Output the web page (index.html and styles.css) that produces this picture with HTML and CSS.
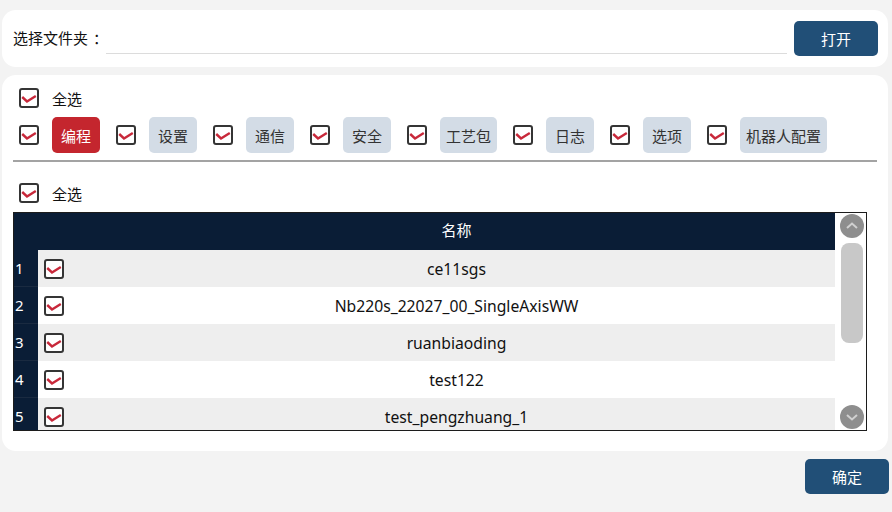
FILE: index.html
```
<!DOCTYPE html>
<html lang="zh">
<head>
  <meta charset="UTF-8">
  <title>导出</title>
  <link rel="stylesheet" href="styles.css">
</head>
<body>
  <div class="panel top-panel">
    <span class="label">选择文件夹<span class="colon">：</span></span>
    <div class="path-input"></div>
    <button class="btn">打开</button>
  </div>

  <div class="panel main-panel">
    <div class="check-row">
      <span class="cb"><svg viewBox="0 0 16 16"><polyline points="1.2,7 6,11.5 14.8,6"/></svg></span>
      <span class="check-text">全选</span>
    </div>

    <div class="tabs">
      <div class="tab-item"><span class="cb"><svg viewBox="0 0 16 16"><polyline points="1.2,7 6,11.5 14.8,6"/></svg></span><span class="tab active">编程</span></div>
      <div class="tab-item"><span class="cb"><svg viewBox="0 0 16 16"><polyline points="1.2,7 6,11.5 14.8,6"/></svg></span><span class="tab">设置</span></div>
      <div class="tab-item"><span class="cb"><svg viewBox="0 0 16 16"><polyline points="1.2,7 6,11.5 14.8,6"/></svg></span><span class="tab">通信</span></div>
      <div class="tab-item"><span class="cb"><svg viewBox="0 0 16 16"><polyline points="1.2,7 6,11.5 14.8,6"/></svg></span><span class="tab">安全</span></div>
      <div class="tab-item"><span class="cb"><svg viewBox="0 0 16 16"><polyline points="1.2,7 6,11.5 14.8,6"/></svg></span><span class="tab w57">工艺包</span></div>
      <div class="tab-item"><span class="cb"><svg viewBox="0 0 16 16"><polyline points="1.2,7 6,11.5 14.8,6"/></svg></span><span class="tab">日志</span></div>
      <div class="tab-item"><span class="cb"><svg viewBox="0 0 16 16"><polyline points="1.2,7 6,11.5 14.8,6"/></svg></span><span class="tab">选项</span></div>
      <div class="tab-item"><span class="cb"><svg viewBox="0 0 16 16"><polyline points="1.2,7 6,11.5 14.8,6"/></svg></span><span class="tab w87">机器人配置</span></div>
    </div>

    <div class="divider"></div>

    <div class="check-row second">
      <span class="cb"><svg viewBox="0 0 16 16"><polyline points="1.2,7 6,11.5 14.8,6"/></svg></span>
      <span class="check-text">全选</span>
    </div>

    <div class="grid">
      <div class="grid-main">
        <div class="grid-head">
          <span class="num-col"></span>
          <span class="cb-col"></span>
          <span class="name-col">名称</span>
        </div>
        <div class="grid-body">
          <div class="grid-row odd"><span class="num-col">1</span><span class="cb-col"><span class="cb"><svg viewBox="0 0 16 16"><polyline points="1.2,7 6,11.5 14.8,6"/></svg></span></span><span class="name-col">ce11sgs</span></div>
          <div class="grid-row"><span class="num-col">2</span><span class="cb-col"><span class="cb"><svg viewBox="0 0 16 16"><polyline points="1.2,7 6,11.5 14.8,6"/></svg></span></span><span class="name-col">Nb220s_22027_00_SingleAxisWW</span></div>
          <div class="grid-row odd"><span class="num-col">3</span><span class="cb-col"><span class="cb"><svg viewBox="0 0 16 16"><polyline points="1.2,7 6,11.5 14.8,6"/></svg></span></span><span class="name-col">ruanbiaoding</span></div>
          <div class="grid-row"><span class="num-col">4</span><span class="cb-col"><span class="cb"><svg viewBox="0 0 16 16"><polyline points="1.2,7 6,11.5 14.8,6"/></svg></span></span><span class="name-col">test122</span></div>
          <div class="grid-row odd"><span class="num-col">5</span><span class="cb-col"><span class="cb"><svg viewBox="0 0 16 16"><polyline points="1.2,7 6,11.5 14.8,6"/></svg></span></span><span class="name-col">test_pengzhuang_1</span></div>
        </div>
      </div>
      <div class="scrollbar">
        <span class="sb-btn"><svg viewBox="0 0 24 24"><polyline points="7,14 12,9.5 17,14"/></svg></span>
        <div class="sb-track"><div class="sb-thumb"></div></div>
        <span class="sb-btn"><svg viewBox="0 0 24 24"><polyline points="7,10 12,14.5 17,10"/></svg></span>
      </div>
    </div>
  </div>

  <div class="footer">
    <button class="btn">确定</button>
  </div>
</body>
</html>
```

FILE: styles.css
```
body {
  margin: 0;
  background: #f3f3f3;
  font-family: "Noto Sans", "Noto Sans CJK SC", sans-serif;
  color: #111;
  font-size: 15px;
}
.panel {
  background: #fff;
  border-radius: 14px;
  margin-left: 2px;
  width: 886px;
}
.top-panel {
  margin-top: 10px;
  height: 57px;
  display: flex;
  align-items: center;
  padding: 0 10px 0 11px;
  box-sizing: border-box;
}
.label {
  width: 93px;
  font-family: "Noto Sans CJK SC", sans-serif;
  font-size: 15px;
  margin-top: -2px;
  white-space: nowrap;
}
.colon {
  margin-left: 5px;
}
.path-input {
  flex: 1;
  height: 26px;
  border-bottom: 1px solid #dcdcdc;
  margin-top: 4px;
}
.btn {
  width: 84px;
  height: 35px;
  border: none;
  border-radius: 5px;
  background: #214f77;
  color: #fff;
  font-family: "Noto Sans CJK SC", sans-serif;
  font-size: 15px;
  cursor: pointer;
}
.top-panel .btn {
  margin-left: 7px;
}

.main-panel {
  margin-top: 8px;
  height: 376px;
  box-sizing: border-box;
  padding: 13px 11px 0 11px;
}
.check-row {
  display: flex;
  align-items: center;
  height: 20px;
  padding-left: 6px;
}
.check-text {
  margin-left: 13px;
  font-family: "Noto Sans CJK SC", sans-serif;
  font-size: 15px;
}
.check-row.second {
  margin-top: 21px;
}

.cb {
  width: 20px;
  height: 20px;
  box-sizing: border-box;
  border: 2px solid #353535;
  border-radius: 3px;
  background: #fff;
  display: inline-flex;
  flex-shrink: 0;
}
.cb svg {
  width: 16px;
  height: 16px;
  fill: none;
  stroke: #c8283a;
  stroke-width: 2.4;
}

.tabs {
  display: flex;
  margin-top: 9px;
  padding-left: 6px;
  height: 36px;
}
.tab-item {
  display: flex;
  align-items: center;
  margin-right: 16px;
}
.tab {
  margin-left: 13px;
  height: 36px;
  width: 48px;
  border-radius: 5px;
  background: #d3dce6;
  color: #333;
  display: flex;
  align-items: center;
  justify-content: center;
  font-family: "Noto Sans CJK SC", sans-serif;
  font-size: 15px;
  white-space: nowrap;
}
.tab.w57 {
  width: 57px;
}
.tab.w87 {
  width: 87px;
}
.tab.active {
  background: #c4262e;
  color: #fff;
}
.divider {
  margin-top: 7px;
  height: 2px;
  background: #a3a3a3;
  width: 864px;
}

.grid {
  margin-top: 9px;
  width: 854px;
  height: 219px;
  border: 1px solid #1c1c1c;
  box-sizing: border-box;
  display: flex;
  overflow: hidden;
}
.grid-main {
  flex: 1;
  display: flex;
  flex-direction: column;
}
.grid-head {
  height: 37px;
  background: #0a1d36;
  color: #fff;
  display: flex;
  align-items: center;
  font-family: "Noto Sans CJK SC", sans-serif;
  font-size: 15px;
  flex-shrink: 0;
}
.grid-head .name-col {
  margin-top: -4px;
}
.grid-body {
  flex: 1;
  overflow: hidden;
}
.grid-row {
  height: 37px;
  display: flex;
  align-items: center;
  background: #fff;
  font-size: 15.7px;
}
.grid-row.odd {
  background: #eeeeee;
}
.num-col {
  width: 24px;
  align-self: stretch;
  background: #0a1d36;
  color: #fff;
  display: flex;
  align-items: center;
  padding-left: 1px;
  box-sizing: border-box;
  border-bottom: 1px solid #1a2a40;
  font-size: 15px;
}
.grid-head .num-col {
  border-bottom: none;
}
.cb-col {
  width: 44px;
  display: flex;
  padding-left: 6px;
  box-sizing: border-box;
}
.name-col {
  flex: 1;
  text-align: center;
  padding-right: 4px;
}

.scrollbar {
  width: 31px;
  background: #fff;
  display: flex;
  flex-direction: column;
  align-items: center;
  padding-top: 1px;
  padding-left: 3px;
  box-sizing: border-box;
}
.sb-btn {
  width: 24px;
  height: 24px;
  border-radius: 50%;
  background: #8e8e8e;
  display: flex;
  flex-shrink: 0;
}
.sb-btn svg {
  width: 24px;
  height: 24px;
  fill: none;
  stroke: #d0d0d0;
  stroke-width: 2;
}
.sb-track {
  flex: 1;
  padding: 5px 0;
}
.sb-thumb {
  width: 22px;
  height: 100px;
  border-radius: 8px;
  background: #c8c8c8;
}
.scrollbar .sb-btn:last-child {
  margin-bottom: 1px;
}

.footer {
  display: flex;
  justify-content: flex-end;
  margin-top: 8px;
  padding-right: 3px;
}
.footer .btn {
  height: 35px;
}
```
